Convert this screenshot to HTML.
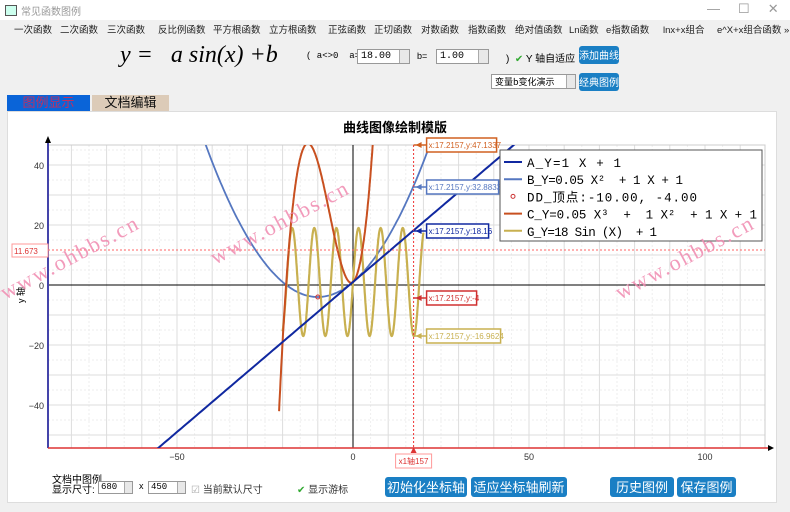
<!DOCTYPE html><html><head><meta charset="utf-8"><style>
html,body{margin:0;width:790px;height:512px;overflow:hidden}
body{background:#f0f0f0;font-family:"Liberation Sans","Noto Sans CJK SC",sans-serif;font-size:11px;position:relative}
.a{position:absolute;white-space:nowrap}
svg{display:block;overflow:hidden}
.btn{position:absolute;background:#1a7fc4;color:#fff;border-radius:3px;text-align:center;font-family:"Noto Sans CJK SC",sans-serif}
.inp{position:absolute;background:#fff;border:1px solid #999;font-family:"Liberation Mono",monospace;font-size:10px;box-sizing:border-box;padding:1px 3px}
.sp{position:absolute;right:0;top:0;width:9px;height:100%;border-left:1px solid #aaa;background:#e8e8e8}
</style></head><body>
<div class="a" style="left:0;top:0;width:790px;height:20px;background:#fff"></div>
<div class="a" style="left:5px;top:5px;width:10px;height:9px;border:1px solid #555;background:#cfe"></div>
<div class="a" style="left:21px;top:3px;color:#999;font-size:10px">常见函数图例</div>
<div class="a" style="left:707px;top:1px;color:#999;font-size:13px">—&nbsp;&nbsp;&nbsp;&nbsp;&nbsp;☐&nbsp;&nbsp;&nbsp;&nbsp;&nbsp;✕</div>
<div class="a" style="left:0;top:21px;width:790px;height:15px;font-size:9.5px;color:#222;overflow:hidden">
<span class="a" style="left:14px;top:1px">一次函数</span><span class="a" style="left:60px;top:1px">二次函数</span><span class="a" style="left:107px;top:1px">三次函数</span><span class="a" style="left:158px;top:1px">反比例函数</span><span class="a" style="left:213px;top:1px">平方根函数</span><span class="a" style="left:269px;top:1px">立方根函数</span><span class="a" style="left:328px;top:1px">正弦函数</span><span class="a" style="left:374px;top:1px">正切函数</span><span class="a" style="left:421px;top:1px">对数函数</span><span class="a" style="left:468px;top:1px">指数函数</span><span class="a" style="left:515px;top:1px">绝对值函数</span><span class="a" style="left:569px;top:1px">Ln函数</span><span class="a" style="left:606px;top:1px">e指数函数</span><span class="a" style="left:663px;top:1px">lnx+x组合</span><span class="a" style="left:717px;top:1px">e^X+x组合函数 »</span></div>
<div class="a" style="left:120px;top:42px;font-family:'Liberation Serif',serif;font-style:italic;font-size:24px">y = &nbsp;&nbsp;a sin(x) +b</div>
<div class="a" style="left:306px;top:51px;font-size:9px;font-family:'Liberation Mono',monospace">( a&lt;&gt;0 &nbsp;a=</div>
<div class="inp" style="left:357px;top:49px;width:53px;height:15px">18.00<div class="sp"></div></div>
<div class="a" style="left:417px;top:51px;font-size:9px">b=</div>
<div class="inp" style="left:436px;top:49px;width:53px;height:15px">1.00<div class="sp"></div></div>
<div class="a" style="left:506px;top:50px;font-size:10px">) &nbsp;<span style="color:#3a3">✔</span> Y 轴自适应</div>
<div class="btn" style="left:579px;top:46px;width:40px;height:18px;line-height:18px;font-size:10px">添加曲线</div>
<div class="inp" style="left:491px;top:74px;width:85px;height:15px;font-family:'Noto Sans CJK SC',sans-serif;font-size:9px;padding:0 3px;overflow:hidden">变量b变化演示<div class="sp" style="width:8px"></div></div>
<div class="btn" style="left:579px;top:73px;width:40px;height:18px;line-height:18px;font-size:10px">经典图例</div>
<div class="a" style="left:7px;top:95px;width:83px;height:16px;background:#0a64d8;color:#c03060;font-size:13px;text-align:center;line-height:16px">图例显示</div>
<div class="a" style="left:92px;top:95px;width:77px;height:16px;background:#dccbb8;color:#111;font-size:13px;text-align:center;line-height:16px">文档编辑</div>
<div class="a" style="left:7px;top:111px;width:768px;height:390px;background:#fff;border:1px solid #ddd"></div>
<svg class="a" style="left:0;top:0" width="790" height="512" id="s">
<text x="395" y="132" font-size="13" font-weight="bold" text-anchor="middle" font-family="Noto Sans CJK SC">曲线图像绘制模版</text>
<g id="grid"></g>
<g id="curves"></g>
</svg>
<div class="a" style="left:52px;top:476px;font-size:10px;line-height:10px">文档中图例<br>显示尺寸:</div>
<div class="inp" style="left:98px;top:481px;width:35px;height:13px;font-size:9px;padding:0 2px">680<div class="sp" style="width:7px"></div></div>
<div class="a" style="left:139px;top:481px;font-size:9px">x</div>
<div class="inp" style="left:148px;top:481px;width:38px;height:13px;font-size:9px;padding:0 2px">450<div class="sp" style="width:7px"></div></div>
<div class="a" style="left:191px;top:481px;font-size:10px;color:#333"><span style="color:#aaa">☑</span> 当前默认尺寸</div>
<div class="a" style="left:297px;top:481px;font-size:10px;color:#333"><span style="color:#3a3">✔</span> 显示游标</div>
<div class="btn" style="left:385px;top:477px;width:82px;height:20px;line-height:20px;font-size:13px">初始化坐标轴</div>
<div class="btn" style="left:471px;top:477px;width:96px;height:20px;line-height:20px;font-size:13px">适应坐标轴刷新</div>
<div class="btn" style="left:610px;top:477px;width:64px;height:20px;line-height:20px;font-size:13px">历史图例</div>
<div class="btn" style="left:677px;top:477px;width:59px;height:20px;line-height:20px;font-size:13px">保存图例</div>
<script>
const L=48,R=765,T=145,B=448,X0=353,Y0=285,SX=3.52,SY=3.0;
const px=x=>X0+x*SX, py=y=>Y0-y*SY;
let g='';
for(let v=-80;v<=110;v+=5){let X=px(v);g+=`<line x1="${X}" y1="${T}" x2="${X}" y2="${B}" stroke="${v%10?'#eee':'#ddd'}" ${v%10?'stroke-dasharray="2,2"':''}/>`;}
for(let v=-50;v<=45;v+=5){let Y=py(v);g+=`<line x1="${L}" y1="${Y}" x2="${R}" y2="${Y}" stroke="${v%10?'#eee':'#ddd'}" ${v%10?'stroke-dasharray="2,2"':''}/>`;}
g+=`<rect x="${L}" y="${T}" width="${R-L}" height="${B-T}" fill="none" stroke="#ccc"/>`;
g+=`<line x1="${L}" y1="${Y0}" x2="${R}" y2="${Y0}" stroke="#000"/><line x1="${X0}" y1="${T}" x2="${X0}" y2="${B}" stroke="#000"/>`;
g+=`<line x1="${L}" y1="${T-6}" x2="${L}" y2="${B}" stroke="#44a" stroke-width="2"/><line x1="${L}" y1="${B}" x2="${R+5}" y2="${B}" stroke="#d33" stroke-width="1.5"/>`;
g+=`<polygon points="${L-3},${T-2} ${L+3},${T-2} ${L},${T-9}" fill="#000"/><polygon points="${R+3},${B-3} ${R+3},${B+3} ${R+9},${B}" fill="#000"/>`;
[40,20,0,-20,-40].forEach(v=>g+=`<text x="${L-4}" y="${py(v)+4}" font-size="9" text-anchor="end" fill="#333">${v<0?'−'+(-v):v}</text>`);
[-50,0,50,100].forEach(v=>g+=`<text x="${px(v)}" y="${B+12}" font-size="9" text-anchor="middle" fill="#333">${v<0?'−'+(-v):v}</text>`);
g+=`<text x="24" y="295" font-size="9" transform="rotate(-90 24 295)" text-anchor="middle">y 轴</text>`;
document.getElementById('grid').innerHTML=g;
function P(f,a,b,n,c,w){let d='';for(let i=0;i<=n;i++){let x=a+(b-a)*i/n,y=f(x);if(y>80)y=80;if(y<-90)y=-90;d+=(i?'L':'M')+px(x).toFixed(1)+','+py(y).toFixed(1);}return `<path d="${d}" fill="none" stroke="${c}" stroke-width="${w}"/>`;}
let c=`<defs><clipPath id="cp"><rect x="${L}" y="${T}" width="${R-L}" height="${B-T}"/></clipPath></defs><g clip-path="url(#cp)">`;
c+=P(x=>0.05*x*x+x+1,-50,30,200,'#5577c0',1.8);
c+=P(x=>18*Math.sin(x)+1,-20,20,600,'#c8b050',2.2);
c+=P(x=>0.05*x*x*x+x*x+x+1,-21,20,400,'#c85020',2);
c+=P(x=>x+1,-90,120,300,'#1028a0',2);
c+=`<circle cx="${px(-10)}" cy="${py(-4)}" r="2" fill="none" stroke="#c33"/>`;
c+=`<line x1="${px(17.2157)}" y1="${T}" x2="${px(17.2157)}" y2="${B}" stroke="#e33" stroke-dasharray="2,2"/>`;
c+=`<line x1="${L}" y1="${py(11.673)}" x2="${R}" y2="${py(11.673)}" stroke="#f66" stroke-dasharray="2,2"/>`;
c+=`</g>`;
const cx=px(17.2157);
function lab(y,t,col,w){return `<rect x="${cx+13}" y="${y-7}" width="${w}" height="14" fill="#fff" stroke="${col}" stroke-width="1.5"/><text x="${cx+15}" y="${y+3}" font-size="8" fill="${col}">${t}</text><line x1="${cx}" y1="${y}" x2="${cx+13}" y2="${y}" stroke="${col}" stroke-width="1.5"/><polygon points="${cx+2},${y} ${cx+8},${y-3} ${cx+8},${y+3}" fill="${col}"/>`;}
c+=lab(145,'x:17.2157,y:47.1337','#d06020',70)+lab(187,'x:17.2157,y:32.8833','#5577c0',72)+lab(231,'x:17.2157,y:18.16','#1028a0',62)+lab(298,'x:17.2157,y:-4','#d03030',50)+lab(336,'x:17.2157,y:-16.9624','#c8b050',74);
c+=`<rect x="12" y="244" width="36" height="13" fill="#fff" stroke="#f99"/><text x="14" y="254" font-size="8" fill="#d33">11.673</text>`;
c+=`<rect x="${cx-18}" y="${B+6}" width="36" height="14" fill="#fff" stroke="#f99"/><text x="${cx-15}" y="${B+16}" font-size="8" fill="#d33">x1轴157</text><polygon points="${cx-3},${B+5} ${cx+3},${B+5} ${cx},${B-1}" fill="#d33"/>`;
c+=`<rect x="500" y="150" width="262" height="91" fill="#fff" stroke="#555"/>`;
const lg=[['#1028a0','A_Y=1 X + 1'],['#5577c0','B_Y=0.05 X² &#160;+ 1 X + 1'],['c','DD_顶点:-10.00, -4.00'],['#c85020','C_Y=0.05 X³ &#160;+ &#160;1 X² &#160;+ 1 X + 1'],['#c8b050','G_Y=18 Sin (X) &#160;+ 1']];
lg.forEach((e,i)=>{let y=162+i*17.2;c+=e[0]=='c'?`<circle cx="513" cy="${y}" r="2" fill="none" stroke="#c33"/>`:`<line x1="504" y1="${y}" x2="522" y2="${y}" stroke="${e[0]}" stroke-width="2"/>`;c+=`<text x="527" y="${y+5}" font-size="12.5" textLength="${[94,156,170,230,130][i]}" font-family="Liberation Mono,Noto Sans CJK SC,monospace">${e[1]}</text>`;});
[[5,300],[215,265],[620,300]].forEach(p=>c+=`<text x="${p[0]}" y="${p[1]}" font-size="22" fill="#f08ab0" opacity="0.85" font-family="Liberation Serif" transform="rotate(-28 ${p[0]} ${p[1]})" letter-spacing="2">www.ohbbs.cn</text>`);
document.getElementById('curves').innerHTML=c;
</script>
</body></html>
